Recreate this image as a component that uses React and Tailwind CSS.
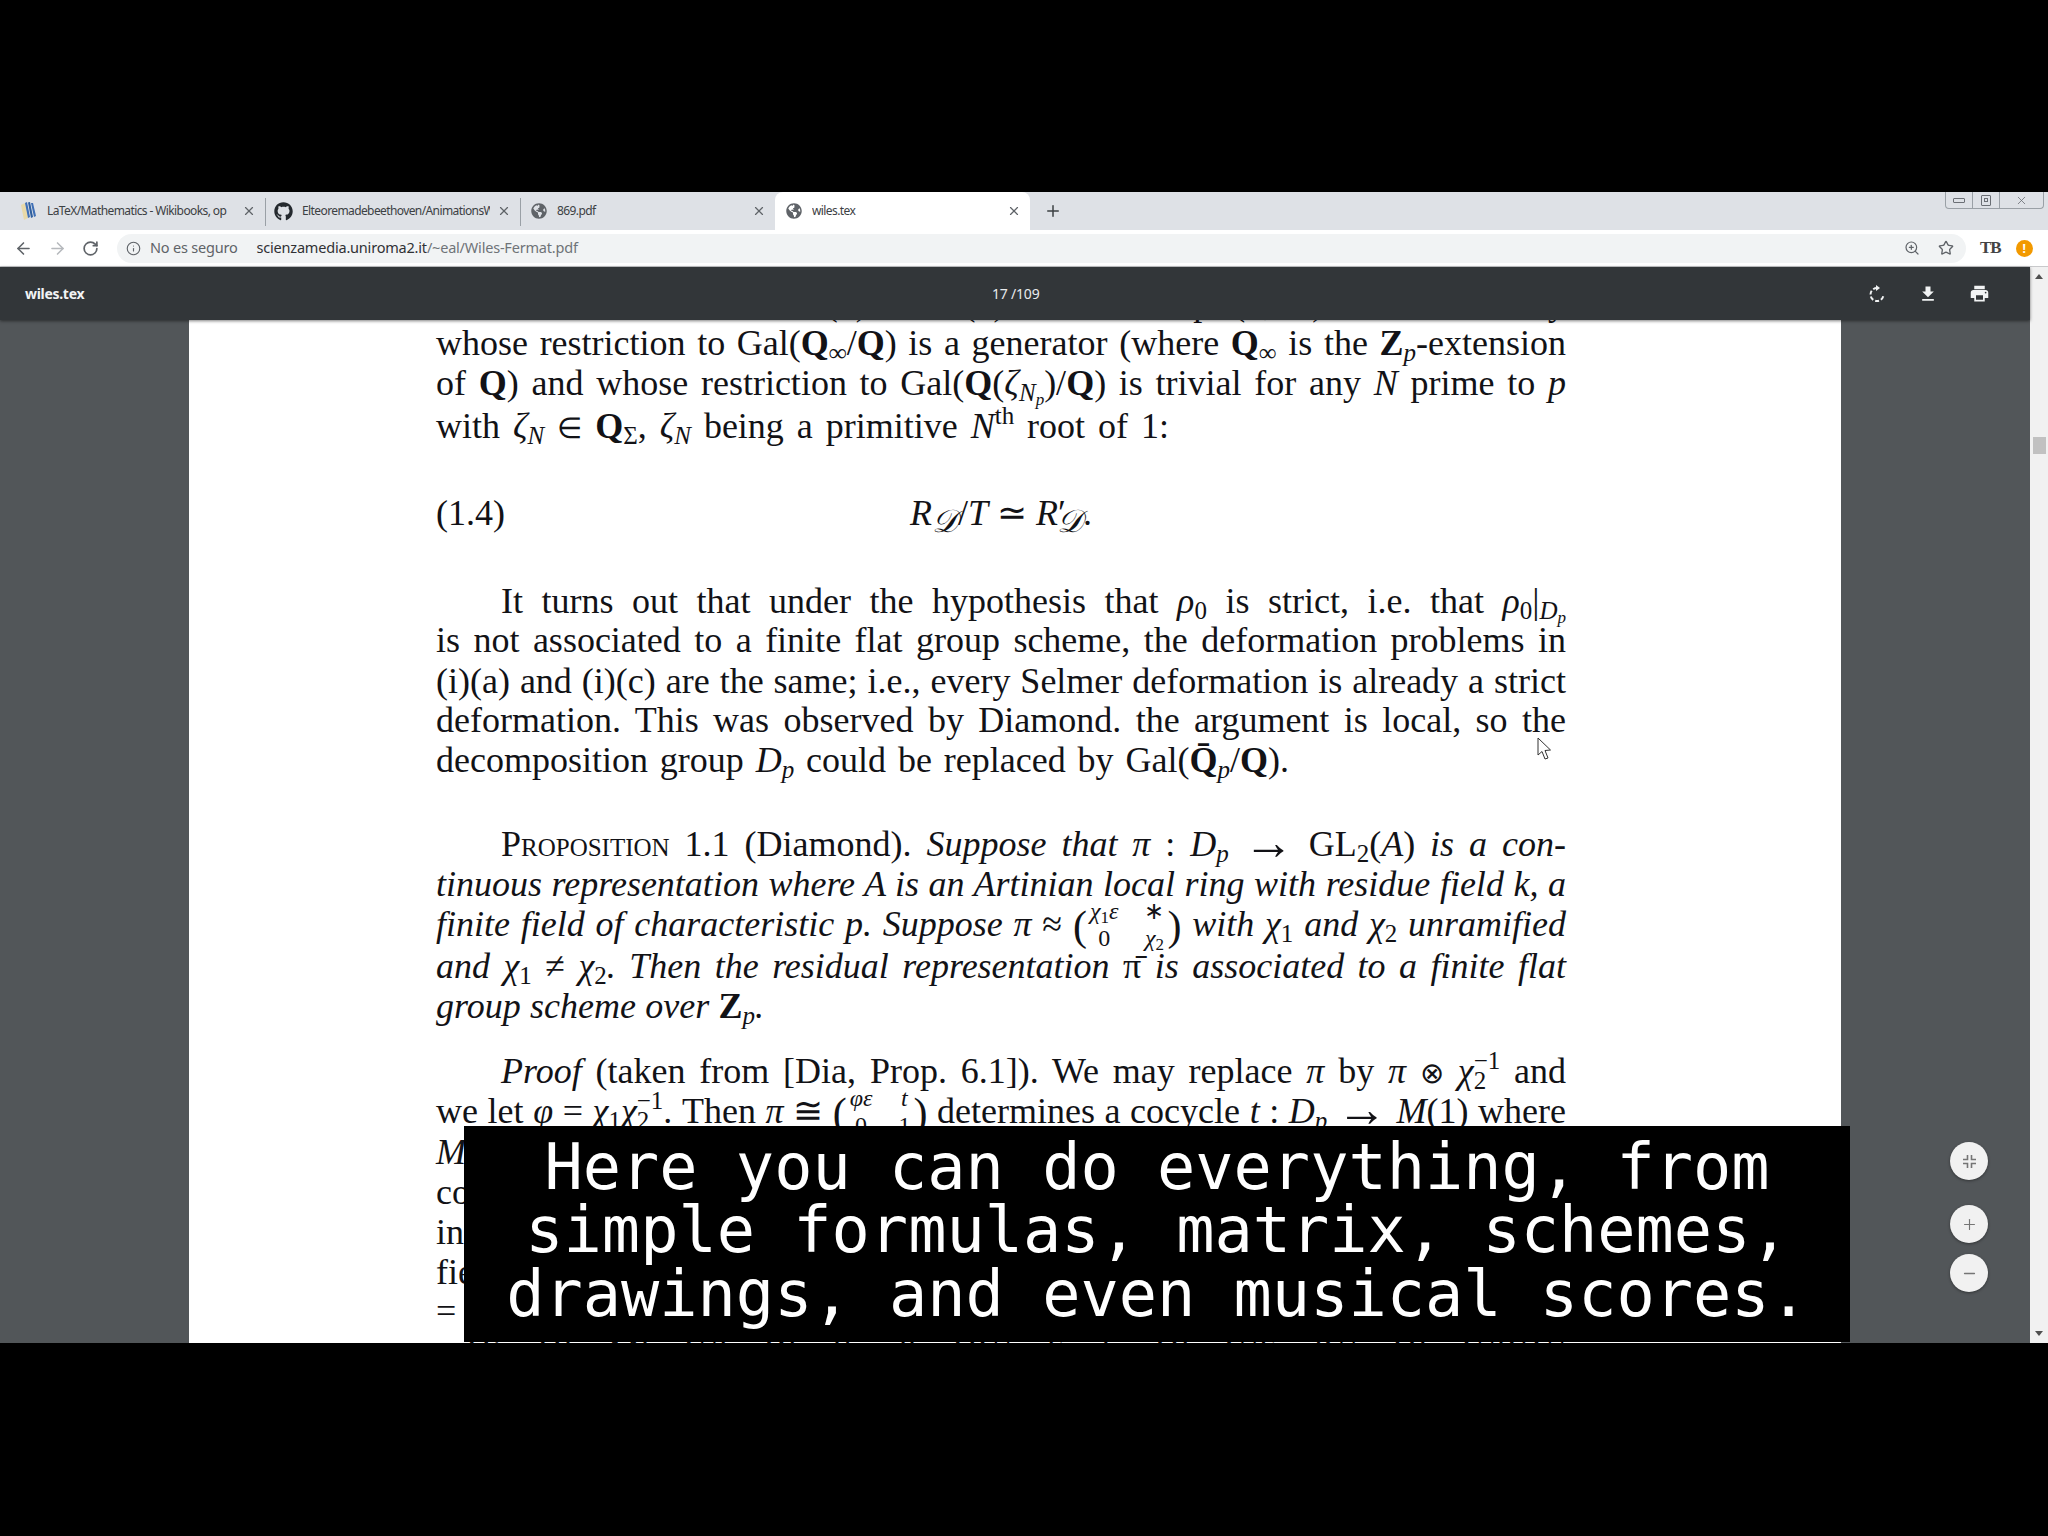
import React from 'react';
import { ArrowLeft, ArrowRight, RotateCw, Info, ZoomIn, Star, X, Plus, Minus } from 'lucide-react';
import { FaGithub, FaGlobeAmericas } from 'react-icons/fa';

const ui = { fontFamily: '"Noto Sans", sans-serif' };

const tabs = [
  { title: 'LaTeX/Mathematics - Wikibooks, op', icon: 'wiki' },
  { title: 'Elteoremadebeethoven/AnimationsW', icon: 'github' },
  { title: '869.pdf', icon: 'globe' },
  { title: 'wiles.tex', icon: 'globe', active: true },
];

const WikiIcon = () => (
  <svg width="18" height="20" viewBox="0 0 18 20">
    <path d="M1 4 L5 2 L8 17 L4 19 Z" fill="#e8d9a8" />
    <path d="M5 2 L7 1 L10 16 L8 17 Z" fill="#3f6fb5" />
    <path d="M8 1.5 L10 1 L13 16 L11 17 Z" fill="#2f5f9f" />
    <path d="M11 2 L13 2 L16 15 L14 16 Z" fill="#3f6fb5" />
  </svg>
);

const Tab = ({ title, icon, active, sep }) => (
  <div className={`relative flex w-[255px] h-full items-center pl-[9px] pr-[9px] ${active ? 'bg-white rounded-t-lg' : ''}`}>
    <span className="w-[19px] flex justify-center shrink-0">
      {icon === 'wiki' && <WikiIcon />}
      {icon === 'github' && <FaGithub size={19} color="#24292e" />}
      {icon === 'globe' && <FaGlobeAmericas size={16} color="#5f6368" />}
    </span>
    <span className="ml-[9px] w-[188px] overflow-hidden whitespace-nowrap text-[12px] tracking-[-0.6px] text-[#3c4043]">{title}</span>
    <X size={14} strokeWidth={2} className="ml-auto text-[#5f6368]" />
    {sep && <span className="absolute right-[-1px] top-[6px] bottom-[4px] w-px bg-[#9aa0a6]" />}
  </div>
);

const Sub = ({ children }) => <span className="text-[25px] leading-[0] align-[-6px]">{children}</span>;
const Sup = ({ children }) => <span className="text-[25px] leading-[0] align-[14px]">{children}</span>;
const Tiny = ({ children }) => <span className="text-[17px] leading-[0] align-[-4px] not-italic">{children}</span>;
const I = ({ children }) => <span className="italic">{children}</span>;
const B = ({ children }) => <span className="font-bold">{children}</span>;
const Sym = ({ children }) => <span className="text-[29px] leading-[0]">{children}</span>;
const Arrow = () => <span className="text-[50px] leading-[0] align-[-3px]">→</span>;
const Cal = () => <span className="text-[32px] leading-[0] align-[-7px] italic">𝒟</span>;

const Paren = ({ children }) => <span className="text-[42px] leading-[0] align-[-4px] font-normal not-italic">{children}</span>;

const Matrix = ({ cells }) => (
  <span className="inline-grid h-0 grid-cols-[auto_auto] grid-rows-[15px_15px] gap-y-[12px] gap-x-[26px] justify-items-center text-[24px] leading-[15px] align-[17px] mx-[3px]">
    {cells.map((c, i) => <span key={i}>{c}</span>)}
  </span>
);

// superscript stacked over a subscript
const Stack = ({ sup, sub }) => (
  <span className="inline-grid h-0 grid-rows-[15px_15px] gap-y-[5px] text-[25px] leading-[15px] align-[14px]">
    <span>{sup}</span>
    <span>{sub}</span>
  </span>
);

const Line = ({ w = 'w-[1130px]', indent, mt = '', children }) => (
  <div className={`h-[40px] leading-[40px] text-justify [text-align-last:justify] ${w} ${indent ? 'pl-[65px]' : ''} ${mt}`}>
    {children}
  </div>
);

export default function App() {
  return (
    <div className="w-[2048px] h-[1536px] bg-black pt-[192px] overflow-hidden" style={ui}>
      {/* tab strip */}
      <div className="h-[38px] bg-[#dee1e6] flex items-end pl-[10px]">
        {tabs.map((t, i) => <Tab key={t.title} {...t} sep={i < 2} />)}
        <Plus size={18} strokeWidth={2} className="ml-[14px] mb-[10px] text-[#3c4043]" />
        <div className="ml-auto mr-[4px] self-start flex h-[17px] w-[99px] border border-t-0 border-[#9aa0a6] rounded-b-[4px]">
          <div className="w-[27px] flex items-center justify-center border-r border-[#9aa0a6]">
            <span className="w-[12px] h-[5px] border border-[#6b6f75] rounded-[1px]" />
          </div>
          <div className="w-[27px] flex items-center justify-center border-r border-[#9aa0a6]">
            <span className="w-[10px] h-[11px] border border-[#6b6f75] rounded-[1px] flex items-center justify-center">
              <span className="w-[4px] h-[4px] border border-[#6b6f75]" />
            </span>
          </div>
          <div className="flex-1 flex items-center justify-center">
            <X size={13} strokeWidth={1.5} className="text-[#6b6f75]" />
          </div>
        </div>
      </div>

      {/* address bar */}
      <div className="h-[37px] bg-white flex items-center pl-[14px] border-b border-[#c8c9cb]">
        <ArrowLeft size={19} strokeWidth={2} className="text-[#5f6368]" />
        <ArrowRight size={19} strokeWidth={2} className="ml-[15px] text-[#b6b9bd]" />
        <RotateCw size={17} strokeWidth={2.4} className="ml-[15px] text-[#5f6368]" />
        <div className="ml-[18px] w-[1849px] h-[29px] rounded-full bg-[#f1f3f4] flex items-center pl-[9px] pr-[12px]">
          <Info size={15} strokeWidth={1.8} className="text-[#5f6368]" />
          <span className="ml-[9px] text-[14.5px] tracking-[-0.2px] text-[#5f6368]">No es seguro</span>
          <span className="ml-[19px] text-[14.5px] tracking-[-0.2px] text-[#303134]">
            scienzamedia.uniroma2.it<span className="text-[#6f7378]">/~eal/Wiles-Fermat.pdf</span>
          </span>
          <ZoomIn size={16} strokeWidth={1.8} className="ml-auto text-[#5f6368]" />
          <Star size={16} strokeWidth={2} className="ml-[18px] text-[#5f6368]" />
        </div>
        <span className="ml-[14px] text-[17px] font-bold tracking-[-1px] text-[#444]" style={{ fontFamily: '"Liberation Serif", serif' }}>TB</span>
        <span className="ml-[15px] w-[17px] h-[17px] rounded-full bg-[#f29900] text-white text-[12px] font-bold leading-[17px] text-center">!</span>
      </div>

      <div className="flex h-[1076px]">
        <div className="w-[2030px] flex flex-col">
          {/* pdf toolbar */}
          <div className="relative z-10 h-[53px] bg-[#323639] flex items-center pl-[25px] pr-[40px] shadow-[0_1px_3px_rgba(0,0,0,0.5)]">
            <span className="w-[120px] text-[14px] font-bold tracking-[-0.3px] text-[#f1f3f4]">wiles.tex</span>
            <span className="ml-[847px] text-[14px] tracking-[-0.2px] text-[#e8eaed]">17 /109</span>
            <svg className="ml-auto" width="18" height="18" viewBox="0 0 18 18" fill="none" stroke="#f1f3f4" strokeWidth="2">
              <path d="M9 3 A6.5 6.5 0 1 0 15.5 9.5" strokeDasharray="4 2" />
              <path d="M8 0 L12 3 L8 6 Z" fill="#f1f3f4" stroke="none" />
            </svg>
            <svg className="ml-[32px]" width="20" height="20" viewBox="0 0 24 24" fill="#f1f3f4">
              <path d="M19 9h-4V3H9v6H5l7 7 7-7zM5 18v2h14v-2H5z" />
            </svg>
            <svg className="ml-[31px]" width="21" height="21" viewBox="0 0 24 24" fill="#f1f3f4">
              <path d="M19 8H5c-1.66 0-3 1.34-3 3v6h4v4h12v-4h4v-6c0-1.66-1.34-3-3-3zm-3 11H8v-5h8v5zm3-7c-.55 0-1-.45-1-1s.45-1 1-1 1 .45 1 1-.45 1-1 1zm-1-9H6v4h12V3z" />
            </svg>
          </div>

          {/* viewer */}
          <div className="relative flex-1 bg-[#525659] pl-[189px] overflow-hidden">
            <div className="w-[1652px] h-full bg-white pl-[247px] text-[36px] text-[#121216] overflow-hidden" style={{ fontFamily: '"Liberation Serif", serif' }}>
              <div className="h-[3px] overflow-hidden">
                <div className="-mt-[37px] leading-[40px] text-justify [text-align-last:justify] w-[1130px]">
                  some data of the form (1) and (1) then a map (1, 1) in a set of y
                </div>
              </div>
              <Line>whose restriction to Gal(<B>Q</B><Sub><I>∞</I></Sub>/<B>Q</B>) is a generator (where <B>Q</B><Sub>∞</Sub> is the <B>Z</B><Sub><I>p</I></Sub>-extension</Line>
              <Line>of <B>Q</B>) and whose restriction to Gal(<B>Q</B>(<I>ζ</I><Sub><I>N<Tiny><I>p</I></Tiny></I></Sub>)/<B>Q</B>) is trivial for any <I>N</I> prime to <I>p</I></Line>
              <Line w="w-[733px]" mt="mt-[3px]">with <I>ζ</I><Sub><I>N</I></Sub> <Sym>∈</Sym> <B>Q</B><Sub>Σ</Sub>, <I>ζ</I><Sub><I>N</I></Sub> being a primitive <I>N</I><Sup>th</Sup> root of 1:</Line>

              <div className="mt-[47px] h-[40px] leading-[40px] w-[1130px] grid grid-cols-[1fr_auto_1fr]">
                <span>(1.4)</span>
                <span><I>R</I><Cal />/<I>T</I> ≃ <I>R</I>′<span className="-ml-[9px]"><Cal /></span>.</span>
                <span />
              </div>

              <Line indent mt="mt-[48px]">It turns out that under the hypothesis that <I>ρ</I><Sub>0</Sub> is strict, i.e. that <I>ρ</I><Sub>0</Sub>|<Sub><I>D<Tiny><I>p</I></Tiny></I></Sub></Line>
              <Line mt="-mt-[1px]">is not associated to a finite flat group scheme, the deformation problems in</Line>
              <Line mt="mt-[1px]">(i)(a) and (i)(c) are the same; i.e., every Selmer deformation is already a strict</Line>
              <Line mt="-mt-[1px]">deformation. This was observed by Diamond. the argument is local, so the</Line>
              <Line w="w-[853px]">decomposition group <I>D</I><Sub><I>p</I></Sub> could be replaced by Gal(<B>Q̄</B><Sub><I>p</I></Sub>/<B>Q</B>).</Line>

              <Line indent mt="mt-[44px]"><span className="[font-variant:small-caps]">Proposition</span> 1.1 (Diamond). <I>Suppose that π</I> : <I>D</I><Sub><I>p</I></Sub> <Arrow /> GL<Sub>2</Sub>(<I>A</I>) <I>is a con-</I></Line>
              <Line><I>tinuous representation where A is an Artinian local ring with residue field k, a</I></Line>
              <Line><I>finite field of characteristic p. Suppose π</I> ≈ <Paren>(</Paren><Matrix cells={[<I>χ<Tiny>1</Tiny>ε</I>, '∗', '0', <I>χ<Tiny>2</Tiny></I>]} /><Paren>)</Paren> <I>with χ</I><Sub>1</Sub> <I>and χ</I><Sub>2</Sub> <I>unramified</I></Line>
              <Line mt="mt-[2px]"><I>and χ</I><Sub>1</Sub> ≠ <I>χ</I><Sub>2</Sub><I>. Then the residual representation </I><span>π̄</span><I> is associated to a finite flat</I></Line>
              <Line w="w-[328px]"><I>group scheme over </I><B>Z</B><Sub><I>p</I></Sub><I>.</I></Line>

              <Line indent mt="mt-[25px]"><I>Proof</I> (taken from [Dia, Prop. 6.1]). We may replace <I>π</I> by <I>π</I> <Sym>⊗</Sym> <I>χ</I><Stack sup="−1" sub="2" /> and</Line>
              <Line>we let <I>φ</I> = <I>χ</I><Sub>1</Sub><I>χ</I><Stack sup="−1" sub="2" />. Then <I>π</I> ≅ <Paren>(</Paren><Matrix cells={[<I>φε</I>, <I>t</I>, '0', '1']} /><Paren>)</Paren> determines a cocycle <I>t</I> : <I>D</I><Sub><I>p</I></Sub> <Arrow /> <I>M</I>(1) where</Line>
              <div className="mt-[1px] h-[40px] leading-[40px]"><I>M</I></div>
              <div className="h-[40px] leading-[40px]">co</div>
              <div className="h-[40px] leading-[40px]">in</div>
              <div className="h-[40px] leading-[40px]">fie</div>
              <div className="-mt-[1px] h-[40px] leading-[40px]">=</div>
              <div className="h-[40px] leading-[40px] text-justify [text-align-last:justify] w-[1130px] pl-[30px]">
                Hi Hl Ml Wl Bl lf dl HW lt k Hl Wlt lW Hl WlKW
              </div>
            </div>

            {/* caption */}
            <div className="absolute left-[464px] top-[806px] w-[1386px] h-[216px] bg-black text-white text-center text-[63.6px] leading-[63.4px] whitespace-pre pt-[10px]" style={{ fontFamily: '"DejaVu Sans Mono", monospace' }}>
              <div>Here you can do everything, from</div>
              <div>simple formulas, matrix, schemes,</div>
              <div>drawings, and even musical scores.</div>
            </div>

            {/* mouse pointer */}
            <svg className="absolute left-[1537px] top-[417px]" width="15" height="24" viewBox="0 0 15 24">
              <path d="M1 1 L1 18 L5 14.5 L8 22 L11 21 L8 13.5 L13.5 13 Z" fill="#fff" stroke="#333" strokeWidth="1" />
            </svg>

            {/* zoom buttons */}
            <button className="absolute left-[1950px] top-[822px] w-[38px] h-[38px] rounded-full bg-[#f1f1f1] shadow-[0_1px_3px_rgba(0,0,0,0.4)] flex items-center justify-center">
              <svg width="15" height="15" viewBox="0 0 15 15" fill="none" stroke="#757575" strokeWidth="1.6">
                <path d="M5.5 1 V5.5 H1 M9.5 1 V5.5 H14 M5.5 14 V9.5 H1 M9.5 14 V9.5 H14" />
              </svg>
            </button>
            <button className="absolute left-[1950px] top-[885px] w-[38px] h-[38px] rounded-full bg-[#f1f1f1] shadow-[0_1px_3px_rgba(0,0,0,0.4)] flex items-center justify-center">
              <Plus size={17} strokeWidth={1.6} className="text-[#757575]" />
            </button>
            <button className="absolute left-[1950px] top-[934px] w-[38px] h-[38px] rounded-full bg-[#f1f1f1] shadow-[0_1px_3px_rgba(0,0,0,0.4)] flex items-center justify-center">
              <Minus size={17} strokeWidth={1.8} className="text-[#757575]" />
            </button>
          </div>
        </div>

        {/* scrollbar */}
        <div className="w-[18px] bg-[#f1f1f1] flex flex-col items-center">
          <span className="mt-[7px] w-0 h-0 border-x-[4px] border-x-transparent border-b-[5px] border-b-[#505050]" />
          <span className="mt-[158px] w-[13px] h-[17px] bg-[#c1c1c1]" />
          <span className="mt-auto mb-[7px] w-0 h-0 border-x-[4px] border-x-transparent border-t-[5px] border-t-[#505050]" />
        </div>
      </div>
    </div>
  );
}
